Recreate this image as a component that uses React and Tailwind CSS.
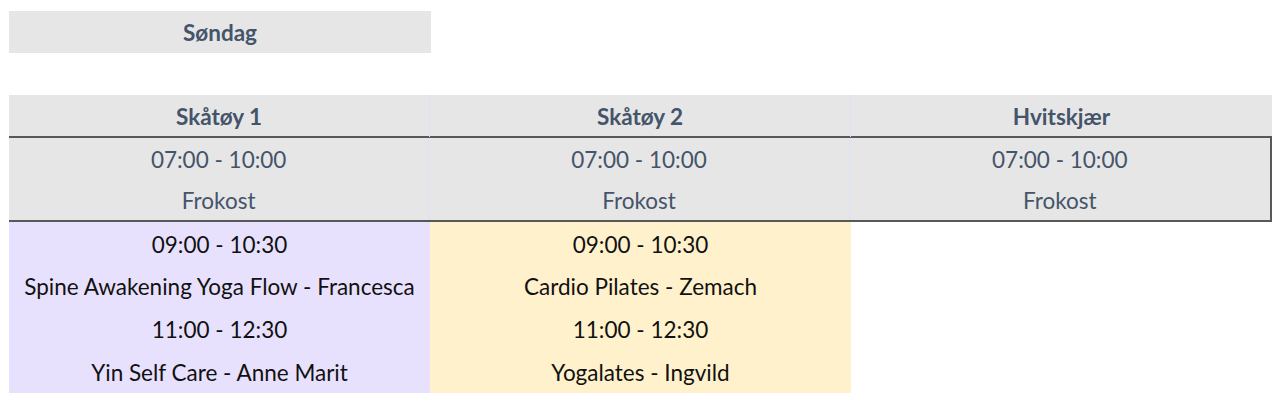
import React from 'react';

const columns = [
  {
    name: 'Skåtøy 1',
    bg: 'bg-[#e8e1fd]',
    sessions: [
      { time: '09:00 - 10:30', title: 'Spine Awakening Yoga Flow - Francesca' },
      { time: '11:00 - 12:30', title: 'Yin Self Care - Anne Marit' },
    ],
  },
  {
    name: 'Skåtøy 2',
    bg: 'bg-[#fff1cc]',
    sessions: [
      { time: '09:00 - 10:30', title: 'Cardio Pilates - Zemach' },
      { time: '11:00 - 12:30', title: 'Yogalates - Ingvild' },
    ],
  },
  { name: 'Hvitskjær', bg: 'bg-white', sessions: [] },
];

// text sits a touch high in Lato, so nudge it down with top padding
const Cell = ({ children, className = '' }) => (
  <div className={`flex items-center justify-center whitespace-nowrap pt-[3px] ${className}`}>{children}</div>
);

export default function App() {
  return (
    <div
      className="bg-white w-[1280px] h-[410px] pl-[9px] pt-[11px] text-[22.5px] leading-none"
      style={{ fontFamily: 'Lato, "Open Sans", sans-serif' }}
    >
      <Cell className="w-[422px] h-[42px] bg-[#e6e6e6] font-bold text-[#44546a]">Søndag</Cell>

      <div className="mt-[42px] w-[1263px]">
        {/* location header */}
        <div className="grid grid-cols-3 h-[42px] bg-[#e6e6e6]">
          {columns.map((col, i) => (
            <Cell key={col.name} className={`font-bold text-[#44546a] ${i < 2 ? 'border-r border-[#dbe2f4]' : ''}`}>
              {col.name}
            </Cell>
          ))}
        </div>

        {/* breakfast */}
        <div className="grid grid-cols-3 -mt-px bg-[#e6e6e6] border-y-2 border-r-2 border-[#585858] text-[#44546a]">
          {columns.map((col, i) => (
            <div key={col.name} className={`flex flex-col ${i < 2 ? 'border-r border-[#dbe2f4]' : ''}`}>
              <Cell className="h-[41px]">07:00 - 10:00</Cell>
              <Cell className="h-[41px]">Frokost</Cell>
            </div>
          ))}
        </div>

        {/* sessions */}
        <div className="grid grid-cols-3 text-[#111]">
          {columns.map((col) => (
            <div key={col.name} className={`flex flex-col ${col.bg}`}>
              {col.sessions.map((s) => (
                <React.Fragment key={s.time}>
                  <Cell className="h-[42.75px]">{s.time}</Cell>
                  <Cell className="h-[42.75px]">{s.title}</Cell>
                </React.Fragment>
              ))}
            </div>
          ))}
        </div>
      </div>
    </div>
  );
}
